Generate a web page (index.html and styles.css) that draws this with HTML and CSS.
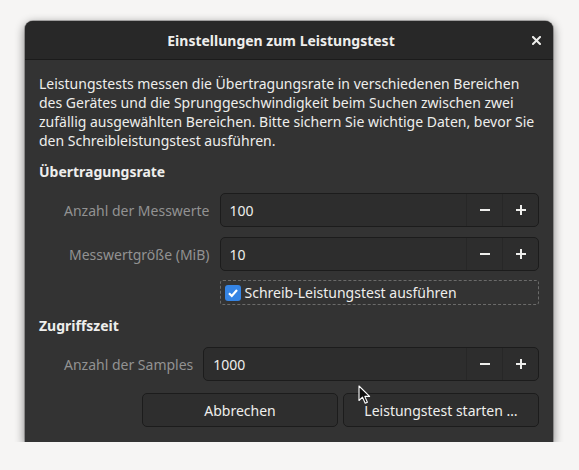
FILE: index.html
```html
<!DOCTYPE html>
<html lang="de">
<head>
<meta charset="utf-8">
<title>Einstellungen zum Leistungstest</title>
<link rel="stylesheet" href="styles.css">
</head>
<body>
<div class="window">
  <header class="titlebar">
    <span class="title">Einstellungen zum Leistungstest</span>
    <span class="close">
      <svg width="9" height="9" viewBox="0 0 9 9"><path d="M1 1 L8 8 M8 1 L1 8" stroke="#eeeeec" stroke-width="2" stroke-linecap="square"/></svg>
    </span>
  </header>
  <main class="content">
    <p class="intro">Leistungstests messen die Übertragungsrate in verschiedenen Bereichen<br>des Gerätes und die Sprunggeschwindigkeit beim Suchen zwischen zwei<br>zufällig ausgewählten Bereichen. Bitte sichern Sie wichtige Daten, bevor Sie<br>den Schreibleistungstest ausführen.</p>
    <h2 class="section">Übertragungsrate</h2>
    <div class="grid">
      <span class="label">Anzahl der Messwerte</span>
      <div class="spin">
        <span class="value">100</span>
        <span class="btn"><svg width="12" height="12" viewBox="0 0 12 12"><path d="M1 6 H11" stroke="#eeeeec" stroke-width="2"/></svg></span>
        <span class="btn"><svg width="12" height="12" viewBox="0 0 12 12"><path d="M1 6 H11 M6 1 V11" stroke="#eeeeec" stroke-width="2"/></svg></span>
      </div>
      <span class="label">Messwertgröße (MiB)</span>
      <div class="spin">
        <span class="value">10</span>
        <span class="btn"><svg width="12" height="12" viewBox="0 0 12 12"><path d="M1 6 H11" stroke="#eeeeec" stroke-width="2"/></svg></span>
        <span class="btn"><svg width="12" height="12" viewBox="0 0 12 12"><path d="M1 6 H11 M6 1 V11" stroke="#eeeeec" stroke-width="2"/></svg></span>
      </div>
      <span></span>
      <div class="check">
        <span class="box"><svg width="12" height="12" viewBox="0 0 12 12"><path d="M2 6.2 L4.8 9 L10 3" stroke="#ffffff" stroke-width="2.2" fill="none"/></svg></span>
        <span class="check-label">Schreib-Leistungstest ausführen</span>
      </div>
    </div>
    <h2 class="section section2">Zugriffszeit</h2>
    <div class="grid">
      <span class="label">Anzahl der Samples</span>
      <div class="spin">
        <span class="value">1000</span>
        <span class="btn"><svg width="12" height="12" viewBox="0 0 12 12"><path d="M1 6 H11" stroke="#eeeeec" stroke-width="2"/></svg></span>
        <span class="btn"><svg width="12" height="12" viewBox="0 0 12 12"><path d="M1 6 H11 M6 1 V11" stroke="#eeeeec" stroke-width="2"/></svg></span>
      </div>
    </div>
    <div class="actions">
      <button class="button">Abbrechen</button>
      <button class="button">Leistungstest starten …</button>
    </div>
  </main>
  <svg class="cursor" width="14" height="20" viewBox="0 0 14 20"><path d="M1 1 L1 15.5 L4.5 12.2 L7.2 18.2 L9.4 17.2 L6.8 11.4 L11.6 11.4 Z" fill="#111" stroke="#fff" stroke-width="1.1" stroke-linejoin="round"/></svg>
</div>
</body>
</html>
```
FILE: styles.css
```css
html, body {
  margin: 0;
  padding: 0;
}
body {
  background: #f6f5f4;
  padding: 21px 0 0 25px;
  font-family: "Noto Sans", "DejaVu Sans", sans-serif;
  font-size: 14px;
  color: #eeeeec;
}
.window {
  position: relative;
  width: 528px;
  height: 421px;
  background: #333333;
  border-radius: 8px 8px 0 0;
  box-shadow: 0 3px 10px 1px rgba(0,0,0,0.45), 0 0 0 1px rgba(0,0,0,0.25);
  display: flex;
  flex-direction: column;
}
.titlebar {
  height: 38px;
  border-bottom: 1px solid #1b1b1b;
  background: #282828;
  border-radius: 8px 8px 0 0;
  display: flex;
  align-items: center;
  padding-left: 18px;
}
.title {
  flex: 1;
  text-align: center;
  font-weight: bold;
}
.close {
  width: 34px;
  display: flex;
  justify-content: center;
  align-items: center;
}
.content {
  padding: 14px 14px 15px 14px;
  display: flex;
  flex-direction: column;
}
.intro {
  margin: 0;
  line-height: 19px;
  white-space: nowrap;
}
.section {
  margin: 12px 0 0 0;
  font-size: 14px;
  font-weight: bold;
  line-height: 19px;
}
.section2 {
  margin-top: 11px;
}
.grid {
  margin: 12px 0 0 25px;
  display: grid;
  grid-template-columns: auto 1fr;
  column-gap: 10px;
  row-gap: 10px;
  align-items: center;
}
.label {
  text-align: right;
  color: #929292;
}
.spin {
  height: 34px;
  box-sizing: border-box;
  border: 1px solid #1c1c1c;
  border-radius: 5px;
  background: #2d2d2d;
  display: flex;
  align-items: stretch;
}
.value {
  flex: 1;
  display: flex;
  align-items: center;
  padding-left: 9px;
}
.btn {
  width: 35px;
  border-left: 1px solid #272727;
  display: flex;
  align-items: center;
  justify-content: center;
}
.check {
  height: 25px;
  box-sizing: border-box;
  margin-top: -1px;
  border: 1px dashed rgba(238,238,236,0.3);
  border-radius: 3px;
  display: flex;
  align-items: center;
  gap: 4px;
  padding-left: 4px;
}
.box {
  width: 16px;
  height: 16px;
  border-radius: 3px;
  background: #3584e4;
  display: flex;
  align-items: center;
  justify-content: center;
}
.actions {
  margin-top: 12px;
  display: flex;
  justify-content: flex-end;
  gap: 5px;
}
.button {
  width: 196px;
  height: 34px;
  border: 1px solid #1c1c1c;
  border-radius: 5px;
  background: #2e2e2e;
  color: #eeeeec;
  font-family: inherit;
  font-size: 14px;
  padding: 0;
}
.cursor {
  position: absolute;
  left: 333px;
  top: 364px;
}
```
